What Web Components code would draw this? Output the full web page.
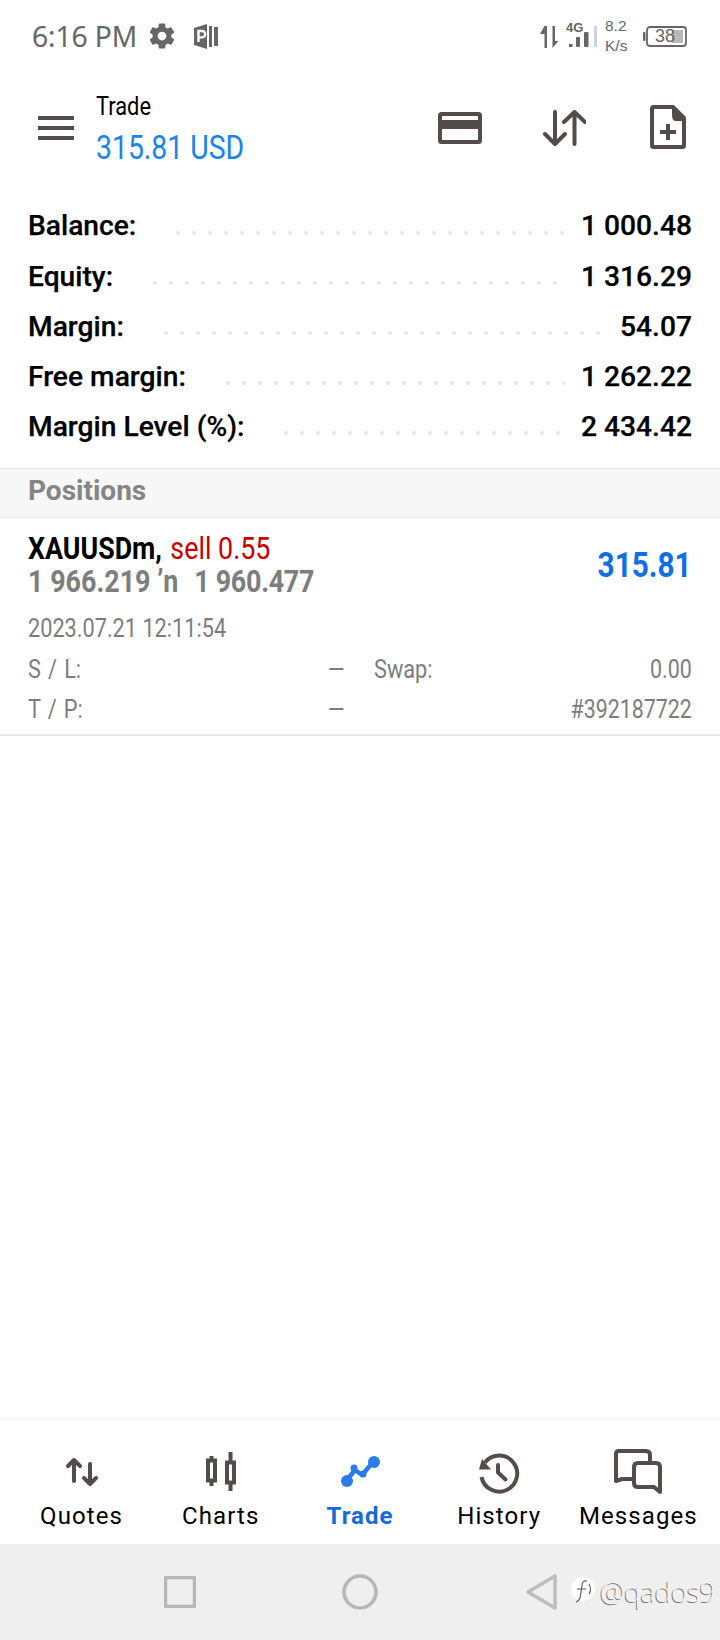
<!DOCTYPE html>
<html><head><meta charset="utf-8"><style>
html,body{margin:0;padding:0;background:#fff}
body{width:720px;height:1640px;display:flex;flex-direction:column;font-family:Roboto,sans-serif;overflow:hidden}
</style></head><body>
<status-bar></status-bar>
<app-header></app-header>
<account-summary>
<summary-row label="Balance:" value="1 000.48"></summary-row>
<summary-row label="Equity:" value="1 316.29"></summary-row>
<summary-row label="Margin:" value="54.07"></summary-row>
<summary-row label="Free margin:" value="1 262.22"></summary-row>
<summary-row label="Margin Level (%):" value="2 434.42"></summary-row>
</account-summary>
<section-band>Positions</section-band>
<position-card></position-card>
<main-space></main-space>
<tab-bar></tab-bar>
<nav-bar></nav-bar>
<script>
function def(name,html,init){customElements.define(name,class extends HTMLElement{constructor(){super();this.attachShadow({mode:'open'}).innerHTML=html;}connectedCallback(){if(init)init(this);}});}
const C='#544b4b';
def('main-space','<style>:host{display:block;flex:1}</style>');
def('status-bar',`<style>
:host{display:flex;align-items:center;height:72px;flex:none;color:#666}
.t{font:400 28.3px "Open Sans",sans-serif;margin-left:32px;line-height:1;white-space:nowrap;letter-spacing:-.1px;-webkit-text-stroke:.2px #666}
svg{display:block;flex:none}
.g{margin-left:10px}.p{margin-left:17px}.sp{flex:1}
.net{margin-left:8px;width:32px;height:32px;position:relative}
.four{position:absolute;left:0;top:1px;font:700 13px/13px "Liberation Sans",sans-serif;color:#666}
.s{font:400 15.500px/20px "Liberation Sans",sans-serif;width:30px;margin-left:7px;color:#666}
.bat{margin-left:8px;margin-right:33px;position:relative;width:44px;height:21px}
.bat span{position:absolute;left:12px;top:0;font:400 18px/21px "Liberation Sans",sans-serif;color:#666}
</style>
<span class="t">6:16 PM</span>
<svg class="g" width="30" height="30" viewBox="0 0 24 24"><path fill="#666" fill-rule="evenodd" d="M19.4 13c.04-.32.1-.66.1-1s-.06-.68-.1-1l2.1-1.6c.2-.15.25-.42.12-.64l-2-3.46c-.12-.22-.4-.3-.6-.22l-2.5 1c-.52-.4-1.08-.73-1.7-.98l-.37-2.65A.5.5 0 0 0 14 2h-4a.5.5 0 0 0-.5.42L9.13 5.07c-.62.25-1.18.6-1.7.98l-2.48-1c-.23-.08-.5 0-.62.22l-2 3.46c-.13.22-.07.49.12.64L4.55 11c-.04.32-.05.66-.05 1s.01.68.05 1l-2.1 1.63c-.2.15-.25.42-.12.64l2 3.46c.12.22.4.3.62.22l2.48-1c.52.4 1.08.73 1.7.98l.37 2.65c.04.24.25.42.5.42h4c.25 0 .46-.18.5-.42l.37-2.65c.62-.25 1.18-.58 1.7-.98l2.5 1c.2.08.48 0 .6-.22l2-3.46c.13-.22.08-.49-.12-.64zM12 15.500a3.500 3.500 0 1 1 0-7 3.500 3.500 0 0 1 0 7z"/></svg>
<svg class="p" width="25" height="25" viewBox="0 0 25 25"><path fill="#666" d="M0 4 13 0v25L0 21z"/><rect x="15" y="2" width="3" height="21" fill="#666"/><rect x="20" y="3" width="4" height="19" fill="#666"/><path fill="none" stroke="#fff" stroke-width="2.400" d="M4.500 18V7h3.500a3 3 0 0 1 0 6.400H4.500"/></svg>
<span class="sp"></span>
<svg width="18.500" height="22" viewBox="0 0 18.500 22" style="margin-top:2px"><path fill="#666" d="M7 0V22H4.500V8H0L4.500 0zM12.500 0H15V15H18.500L12.500 22z"/></svg>
<div class="net"><span class="four">4G</span>
<svg width="32" height="32" viewBox="0 0 32 32" style="position:absolute;left:0;top:0"><g fill="#666"><rect x="3" y="24" width="3.500" height="3"/><rect x="10" y="17" width="4" height="10" rx="1"/><rect x="18" y="12" width="4.500" height="15" rx="1"/></g><rect x="28" y="6" width="3" height="21" fill="#d2d2d2"/></svg></div>
<div class="s">8.2<br>K/s</div>
<div class="bat"><svg width="44" height="21" viewBox="0 0 44 21" style="display:block"><rect x="0" y="6" width="2.500" height="9" rx="1" fill="#666"/><rect x="4" y="1" width="39" height="19" rx="3" fill="none" stroke="#666" stroke-width="1.800"/><rect x="29" y="4" width="11" height="13" fill="#b9b9b9"/></svg><span>38</span></div>`);
def('app-header',`<style>
:host{display:flex;align-items:center;height:112px;flex:none}
.m{margin-left:38px;display:block}
.tx{margin-left:22px;display:flex;flex-direction:column;width:200px}
.a{font:400 26px/31px Roboto,sans-serif;color:#000;transform:scaleX(.84);transform-origin:left;white-space:nowrap;margin-top:4px}
.b{font:400 33px/44px Roboto,sans-serif;color:#1a84e8;transform:scaleX(.86);transform-origin:left;white-space:nowrap;margin-top:4px}
.sp{flex:1}svg{display:block;flex:none}
</style>
<svg class="m" width="36" height="24" viewBox="0 0 36 24"><path fill="${C}" d="M0 0h36v4H0zM0 10h36v4H0zM0 20h36v4H0z"/></svg>
<div class="tx"><div class="a">Trade</div><div class="b">315.81 USD</div></div><span class="sp"></span>
<svg width="44" height="32" viewBox="0 0 44 32" style="margin-top:-1px"><rect x="2" y="2" width="40" height="28" rx="1.500" fill="none" stroke="${C}" stroke-width="4"/><rect x="2" y="8" width="40" height="9" fill="${C}"/></svg>
<svg width="44" height="36" viewBox="0 0 44 36" style="margin-left:60px;margin-top:-1px" fill="none" stroke="${C}" stroke-width="4" stroke-linecap="round" stroke-linejoin="round"><path d="M13 2v32M3 24l10 10 10-10M32.500 34V2M22 12 32.500 2 43 12"/></svg>
<svg width="36" height="44" viewBox="0 0 36 44" style="margin-left:64px;margin-right:34px;margin-top:-2px"><path fill="none" stroke="${C}" stroke-width="4" stroke-linejoin="round" d="M2 3.500Q2 2 3.500 2H23L34 13V40.500Q34 42 32.500 42H3.500Q2 42 2 40.500z"/><path fill="${C}" d="M22 0 36 14V16H26Q22 16 22 10zM16 19h4v6h6v4h-6v6h-4v-6h-6v-4h6z"/></svg>`);
def('account-summary',`<style>:host{display:block;flex:none;padding:17.500px 0 15.500px}</style><slot></slot>`);
def('summary-row',`<style>
:host{display:flex;height:50.200px;align-items:center;padding:0 28px;font:500 28.200px/1 Roboto,sans-serif;color:#000;-webkit-text-stroke:.25px #000;white-space:nowrap}
.d{flex:1;margin:12px 16px 0 40px;height:4px;background:radial-gradient(circle at 2px 2px,#e8e8e8 1.800px,transparent 2.200px) repeat-x;background-size:16px 4px}
</style><span id="l"></span><span class="d"></span><span id="v"></span>`,el=>{el.shadowRoot.getElementById('l').textContent=el.getAttribute('label');el.shadowRoot.getElementById('v').textContent=el.getAttribute('value');});
def('section-band',`<style>:host{display:block;flex:none;box-sizing:border-box;height:50px;padding:0 28px;background:#f7f7f7;border-top:1.500px solid #e6e6e6;border-bottom:1.500px solid #e6e6e6;font:700 28px/44px Roboto,sans-serif;color:#858585}</style><slot></slot>`);
def('position-card',`<style>
:host{display:block;flex:none;box-sizing:border-box;height:218px;border-bottom:2px solid #e8e8e8;position:relative;padding:0 28px;font-family:Roboto,sans-serif;color:#7d7d7d}
.n{transform-origin:left;white-space:nowrap;display:block}
.title{font:700 31px/34px Roboto,sans-serif;transform:scaleX(.865);margin-top:14px;height:34px;color:#000}
.sell{font-weight:400;color:#c80000;margin-left:2px}
.pr{font:700 31px/32px Roboto,sans-serif;transform:scaleX(.868);color:#7d7d7d;height:32px;margin-top:0}
.pr span{margin-left:3px;letter-spacing:-.35px}
.date{font:400 25px/30px Roboto,sans-serif;transform:scaleX(.868);margin-top:16px;height:30px}
.pl{position:absolute;right:28px;top:28px;font:700 35px/40px Roboto,sans-serif;color:#0f6fe3;transform:scaleX(.85);transform-origin:right}
.g{display:grid;grid-template-columns:263px 54px 347px;margin-top:6px;font:400 25px/40px Roboto,sans-serif}
.g>*{white-space:nowrap}
.i{display:inline-block;transform:scaleX(.87);transform-origin:left;word-spacing:2px}
.e{display:inline-block;transform:scaleX(.855);transform-origin:right;text-align:right}
.rt{text-align:right}
.sw{display:flex;justify-content:space-between;padding-left:29px}
</style>
<div class="n title">XAUUSDm, <span class="sell">sell 0.55</span></div>
<div class="n pr">1 966.219 ʼn&nbsp; <span>1 960.477</span></div>
<div class="n date">2023.07.21 12:11:54</div>
<div class="pl">315.81</div>
<div class="g">
<div><span class="i">S / L:</span></div><div class="rt"><span class="e">—</span></div><div class="sw"><span class="i">Swap:</span><span class="e">0.00</span></div>
<div><span class="i">T / P:</span></div><div class="rt"><span class="e">—</span></div><div class="rt"><span class="e">#392187722</span></div>
</div>`);
def('tab-bar',`<style>
:host{display:flex;flex:none;height:126px;box-sizing:border-box;border-top:2px solid #f6f6f6;padding:0 12px;background:#fff}
.t{flex:1;display:flex;flex-direction:column;align-items:center;font:400 24px/28px Roboto,sans-serif;letter-spacing:1.100px;color:#000;white-space:nowrap}
.i{height:84px;display:flex;align-items:center;justify-content:center;box-sizing:border-box;padding-top:20px;margin-bottom:0}
.l{margin-top:-2px}
.on{color:#1469dc;font-weight:700;letter-spacing:1px}
svg{display:block;overflow:visible}
</style>
<div class="t"><div class="i"><svg width="32" height="28" viewBox="0 0 32 28" fill="none" stroke="${C}" stroke-width="4" stroke-linecap="round" stroke-linejoin="round"><path d="M8 23V2M2 8l6-6 6 6M24 6v20M18 20l6 6 6-6"/></svg></div><div class="l">Quotes</div></div>
<div class="t"><div class="i"><svg width="32" height="40" viewBox="0 0 32 40" fill="none" stroke="${C}"><rect x="3" y="8.500" width="7" height="20" stroke-width="4"/><rect x="22" y="10.500" width="7" height="20" stroke-width="4"/><path stroke-width="4" d="M6.500 4v5M6.500 28v6M25.500 0v11M25.500 30v9"/></svg></div><div class="l">Charts</div></div>
<div class="t on"><div class="i"><svg width="40" height="32" viewBox="0 0 40 32"><path d="M7 24 15 14 22 19 33 6" fill="none" stroke="#2a7de9" stroke-width="4.500" stroke-linejoin="round"/><circle cx="7" cy="25" r="6" fill="#2a7de9"/><circle cx="14" cy="12" r="3.500" fill="#2a7de9"/><circle cx="23" cy="18" r="3.500" fill="#2a7de9"/><circle cx="34" cy="6" r="6" fill="#2a7de9"/></svg></div><div class="l">Trade</div></div>
<div class="t"><div class="i"><svg width="40" height="40" viewBox="0 0 40 40" fill="none" stroke="${C}" stroke-width="4"><path d="M6 10.500A18 18 0 1 1 2.500 25"/><path d="M0 17.500H12L3 7z" fill="${C}" stroke="none"/><path d="M19 13v7.500l7.500 7" stroke-linecap="round"/></svg></div><div class="l">History</div></div>
<div class="t"><div class="i"><svg width="48" height="46" viewBox="0 0 48 46" fill="none" stroke="${C}" stroke-width="4" stroke-linejoin="round"><path d="M19 30H8L2 32V5Q2 2 5 2H32Q36 2 36 6V13"/><path d="M24 14H42Q46 14 46 18V43L40 38H24Q20 38 20 34V18Q20 14 24 14Z"/></svg></div><div class="l">Messages</div></div>`);
def('nav-bar',`<style>
:host{display:flex;flex:none;height:96px;background:#efefef;position:relative;align-items:center;padding-left:164px}
svg{display:block;flex:none}
.w{position:absolute;left:570px;top:31px;display:flex;align-items:center;gap:4px;font:300 28px/32px "Open Sans",sans-serif;letter-spacing:-.5px;color:#f6f6f6;text-shadow:-1px 1px 0 #777}
</style>
<svg width="32" height="32" viewBox="0 0 32 32"><rect x="1.500" y="1.500" width="29" height="29" fill="none" stroke="#b7b7b7" stroke-width="3.500"/></svg>
<svg width="36" height="36" viewBox="0 0 36 36" style="margin-left:146px"><circle cx="18" cy="18" r="16" fill="none" stroke="#b7b7b7" stroke-width="3.500"/></svg>
<svg width="32" height="36" viewBox="0 0 32 36" style="margin-left:147px"><path d="M30 2V34L3 18z" fill="none" stroke="#bdbdbd" stroke-width="3.500" stroke-linejoin="round"/></svg>
<div class="w"><svg width="26" height="30" viewBox="0 0 26 30"><path d="M13 1a12 12 0 0 1 12 12c0 7-6 11-12 12-7 0-12-5-12-12A12 12 0 0 1 13 1z" fill="#fff"/><path d="M17 5c-5-1-5 3-5.500 8L10 22q-1 3-4 4M7 13h9M19 8q3 5 0 10" fill="none" stroke="#555" stroke-width="1.100"/></svg><span>@qados9</span></div>`);
</script>
</body></html>
